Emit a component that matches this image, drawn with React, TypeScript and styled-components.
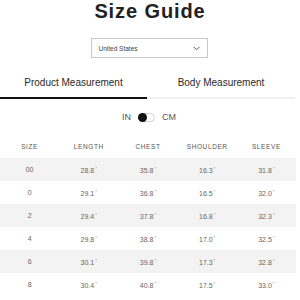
import styled, { createGlobalStyle } from "styled-components";

const GlobalStyle = createGlobalStyle`
    html, body {
        margin: 0;
        padding: 0;
        background: #ffffff;
    }
    body {
        font-family: "Liberation Sans", Arial, sans-serif;
        color: #222222;
    }
`

const rows = [
    { size: "00", length: "28.8", chest: "35.8", shoulder: "16.3", sleeve: "31.8" },
    { size: "0", length: "29.1", chest: "36.8", shoulder: "16.5", sleeve: "32.0" },
    { size: "2", length: "29.4", chest: "37.8", shoulder: "16.8", sleeve: "32.3" },
    { size: "4", length: "29.8", chest: "38.8", shoulder: "17.0", sleeve: "32.5" },
    { size: "6", length: "30.1", chest: "39.8", shoulder: "17.3", sleeve: "32.8" },
    { size: "8", length: "30.4", chest: "40.8", shoulder: "17.5", sleeve: "33.0" },
]

export default function App() {
    return (
        <Page>
            <GlobalStyle />
            <Title>Size Guide</Title>
            <SelectRow>
                <Select>
                    <span>United States</span>
                    <svg width="7" height="5" viewBox="0 0 7 5">
                        <path d="M0.5 0.8 L3.5 3.8 L6.5 0.8" fill="none" stroke="#555" strokeWidth="1" />
                    </svg>
                </Select>
            </SelectRow>
            <Tabs>
                <Tab $active>Product Measurement</Tab>
                <Tab>Body Measurement</Tab>
            </Tabs>
            <UnitRow>
                <span>IN</span>
                <Switch><Knob /></Switch>
                <span>CM</span>
            </UnitRow>
            <Table>
                <HeadRow>
                    <Cell>SIZE</Cell>
                    <Cell>LENGTH</Cell>
                    <Cell>CHEST</Cell>
                    <Cell>SHOULDER</Cell>
                    <Cell>SLEEVE</Cell>
                </HeadRow>
                {rows.map((r, i) => (
                    <Row key={r.size} $striped={i % 2 === 0}>
                        <Cell>{r.size}</Cell>
                        <Cell>{r.length}<Inch>″</Inch></Cell>
                        <Cell>{r.chest}<Inch>″</Inch></Cell>
                        <Cell>{r.shoulder}<Inch>″</Inch></Cell>
                        <Cell>{r.sleeve}<Inch>″</Inch></Cell>
                    </Row>
                ))}
            </Table>
        </Page>
    )
}

const Page = styled.div`
    width: 296px;
    height: 300px;
    overflow: hidden;
    display: flex;
    flex-direction: column;
`

const Title = styled.h1`
    margin: 0;
    height: 22px;
    line-height: 22px;
    text-align: center;
    font-size: 20px;
    font-weight: 700;
    letter-spacing: 0.9px;
    color: #222222;
    padding-left: 4px;
`

const SelectRow = styled.div`
    display: flex;
    justify-content: center;
    padding-top: 16px;
    padding-left: 2px;
`

const Select = styled.div`
    box-sizing: border-box;
    width: 117px;
    height: 20px;
    border: 1px solid #c8c8c8;
    display: flex;
    align-items: center;
    justify-content: space-between;
    padding: 0 7px 0 7px;
    font-size: 6.5px;
    color: #444444;
`

const Tabs = styled.div`
    display: grid;
    grid-template-columns: 147px 148px;
    margin-top: 14px;
`

const Tab = styled.div<{ $active?: boolean }>`
    height: 25px;
    line-height: 22px;
    text-align: center;
    font-size: 10px;
    color: #2a2a2a;
    border-bottom: 2px solid ${p => p.$active ? "#111111" : "#f0f0f0"};
`

const UnitRow = styled.div`
    display: flex;
    align-items: center;
    justify-content: center;
    gap: 7px;
    height: 14px;
    margin-top: 11px;
    font-size: 9px;
    color: #555555;
    padding-left: 2px;
`

const Switch = styled.div`
    box-sizing: border-box;
    width: 17px;
    height: 9px;
    border: 1px solid #d0d0d0;
    border-radius: 5px;
    display: flex;
    align-items: center;
`

const Knob = styled.div`
    width: 9px;
    height: 9px;
    border-radius: 50%;
    background: #111111;
    margin-left: -1px;
`

const Table = styled.div`
    display: flex;
    flex-direction: column;
    margin-top: 11px;
`

const Row = styled.div<{ $striped?: boolean }>`
    display: grid;
    grid-template-columns: repeat(5, 1fr);
    height: 23px;
    align-items: center;
    background: ${p => p.$striped ? "#f3f3f3" : "#ffffff"};
    font-size: 7px;
    color: #666666;
`

const HeadRow = styled(Row)`
    font-size: 6.5px;
    letter-spacing: 0.6px;
    color: #555555;
`

const Cell = styled.div`
    text-align: center;
`

const Inch = styled.span`
    font-size: 5px;
    vertical-align: 2px;
    margin-left: 1px;
    color: #999999;
`
